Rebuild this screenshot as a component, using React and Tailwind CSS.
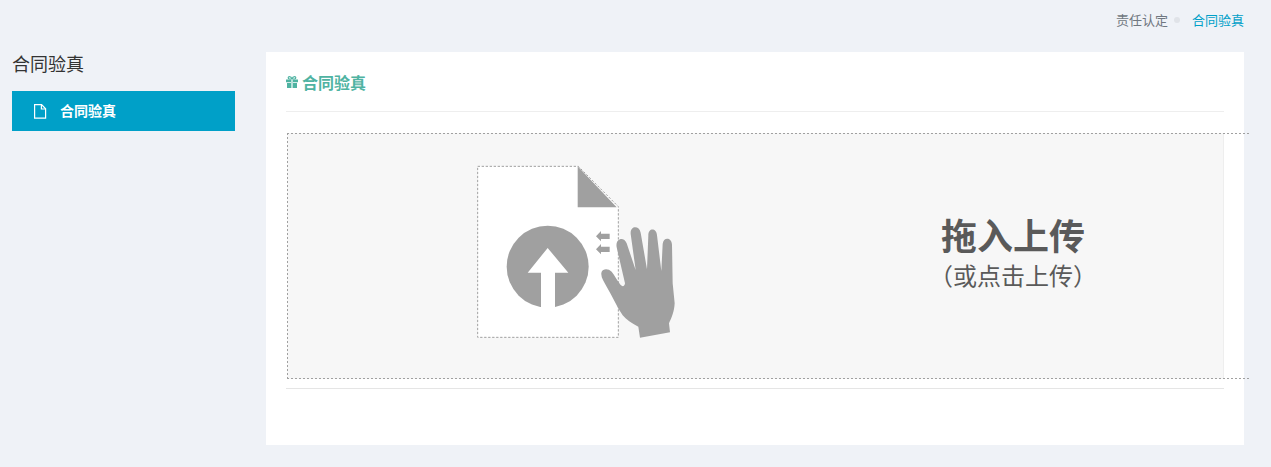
const font = { fontFamily: '"Noto Sans CJK SC", "Liberation Sans", sans-serif' };

function UploadArt() {
  return (
    <svg width="240" height="200" viewBox="0 0 720 600" className="block shrink-0">
      <path
        d="M53 49H355L475 170V562H53Z"
        fill="#fff"
        stroke="#a0a0a0"
        strokeWidth="3"
        strokeDasharray="7 5"
      />
      <path d="M353 49L470 172H353Z" fill="#a0a0a0" />
      <circle cx="263" cy="350" r="123" fill="#a0a0a0" />
      <path d="M263 294L325 368H285V480H243V368H203Z" fill="#fff" />
      <path d="M408 259L423 243V251H449V267H423V274Z" fill="#a0a0a0" />
      <path d="M408 298L423 282V290H449V306H423V313Z" fill="#a0a0a0" />
      <path
        d="M425 365C428 356 445 354 455 365C465 378 472 392 482 405C488 411 494 409 495 400L470 292C465 265 492 258 500 280L527 360L512 252C510 226 538 226 542 248L561 358L565 256C565 232 590 234 591 256L604 363L608 282C610 260 635 262 636 284L638 400L644 460C643 485 634 505 627 520L630 547L540 563L535 530C515 520 498 508 488 496C470 470 458 440 440 410C432 395 420 380 425 365Z"
        fill="#a0a0a0"
      />
    </svg>
  );
}

function GiftIcon() {
  return (
    <svg width="12" height="12" viewBox="0 0 12 12" fill="currentColor" className="block shrink-0">
      <path d="M0 3.4H5V6.2H0ZM7 3.4H12V6.2H7ZM1 7H5V12H1ZM7 7H11V12H7ZM5 3.4H7V12H5Z" />
      <path d="M6 3L3.4 3C1.8 2.8 1.8.6 3.4.6C4.8.6 5.7 1.8 6 3C6.3 1.8 7.2.6 8.6.6C10.2.6 10.2 2.8 8.6 3Z" fill="none" stroke="currentColor" strokeWidth="1.2" />
      <path d="M5.4 3.4H6.6V12H5.4Z" fill="#fff" />
    </svg>
  );
}

function FileIcon() {
  return (
    <svg width="14" height="15" viewBox="0 0 14 15" fill="none" stroke="currentColor" strokeWidth="1.2" className="block shrink-0">
      <path d="M1.6.6H8.6L12.6 4.8V14.1H1.6Z" />
      <path d="M8.4.8V5H12.4" />
    </svg>
  );
}

export default function App() {
  return (
    <div className="h-[467px] bg-[#eff2f7] overflow-hidden" style={font}>
      <div className="h-[52px] pt-[11px] pr-[27px] flex justify-end items-start text-[13px] leading-[18px]">
        <span className="text-[#6f7780]">责任认定</span>
        <span className="w-[6px] h-[6px] rounded-full bg-[#e0e3e8] mt-[6px] ml-[6px] mr-[12px]"></span>
        <span className="text-[#00a0c8]">合同验真</span>
      </div>
      <div className="flex pl-3 pr-[27px]">
        <div className="w-[223px] shrink-0">
          <h2 className="text-[18px] leading-[24px] -mt-px text-[#333] font-normal">合同验真</h2>
          <div className="mt-[16px] h-10 bg-[#00a0c8] flex items-center pl-[21px] text-white">
            <FileIcon />
            <span className="ml-[13px] -mt-[2px] text-[14px] font-bold">合同验真</span>
          </div>
        </div>
        <div className="ml-[31px] w-[978px] h-[393px] bg-white px-5">
          <div className="h-[60px] border-b border-[#eeeeee] flex items-center text-[#4fb3a2]">
            <GiftIcon />
            <span className="ml-[4px] text-[16px] font-bold">合同验真</span>
          </div>
          <div className="relative mt-[21px] ml-px h-[246px] bg-[#f7f7f7] border-r border-[#eeeeee] flex">
            <div className="absolute top-0 left-0 w-[963px] h-px bg-[repeating-linear-gradient(90deg,#a0a0a0_0_2px,transparent_2px_4px)]"></div>
            <div className="absolute bottom-0 left-0 w-[963px] h-px bg-[repeating-linear-gradient(90deg,#a0a0a0_0_2px,transparent_2px_4px)]"></div>
            <div className="absolute top-0 left-0 w-px h-[246px] bg-[repeating-linear-gradient(180deg,#a0a0a0_0_2px,transparent_2px_4px)]"></div>
            <div className="ml-[173px] pt-[17px]">
              <UploadArt />
            </div>
            <div className="ml-[240px] w-[146px] pt-[76px] text-center text-[#5a5a5a]">
              <div className="text-[36px] leading-[50px] font-bold">拖入上传</div>
              <div className="text-[24px] leading-[34px] whitespace-nowrap -ml-[11px] -mt-[1px]">（或点击上传）</div>
            </div>
          </div>
          <div className="mt-[9px] border-b border-[#e5e5e5]"></div>
        </div>
      </div>
    </div>
  );
}
